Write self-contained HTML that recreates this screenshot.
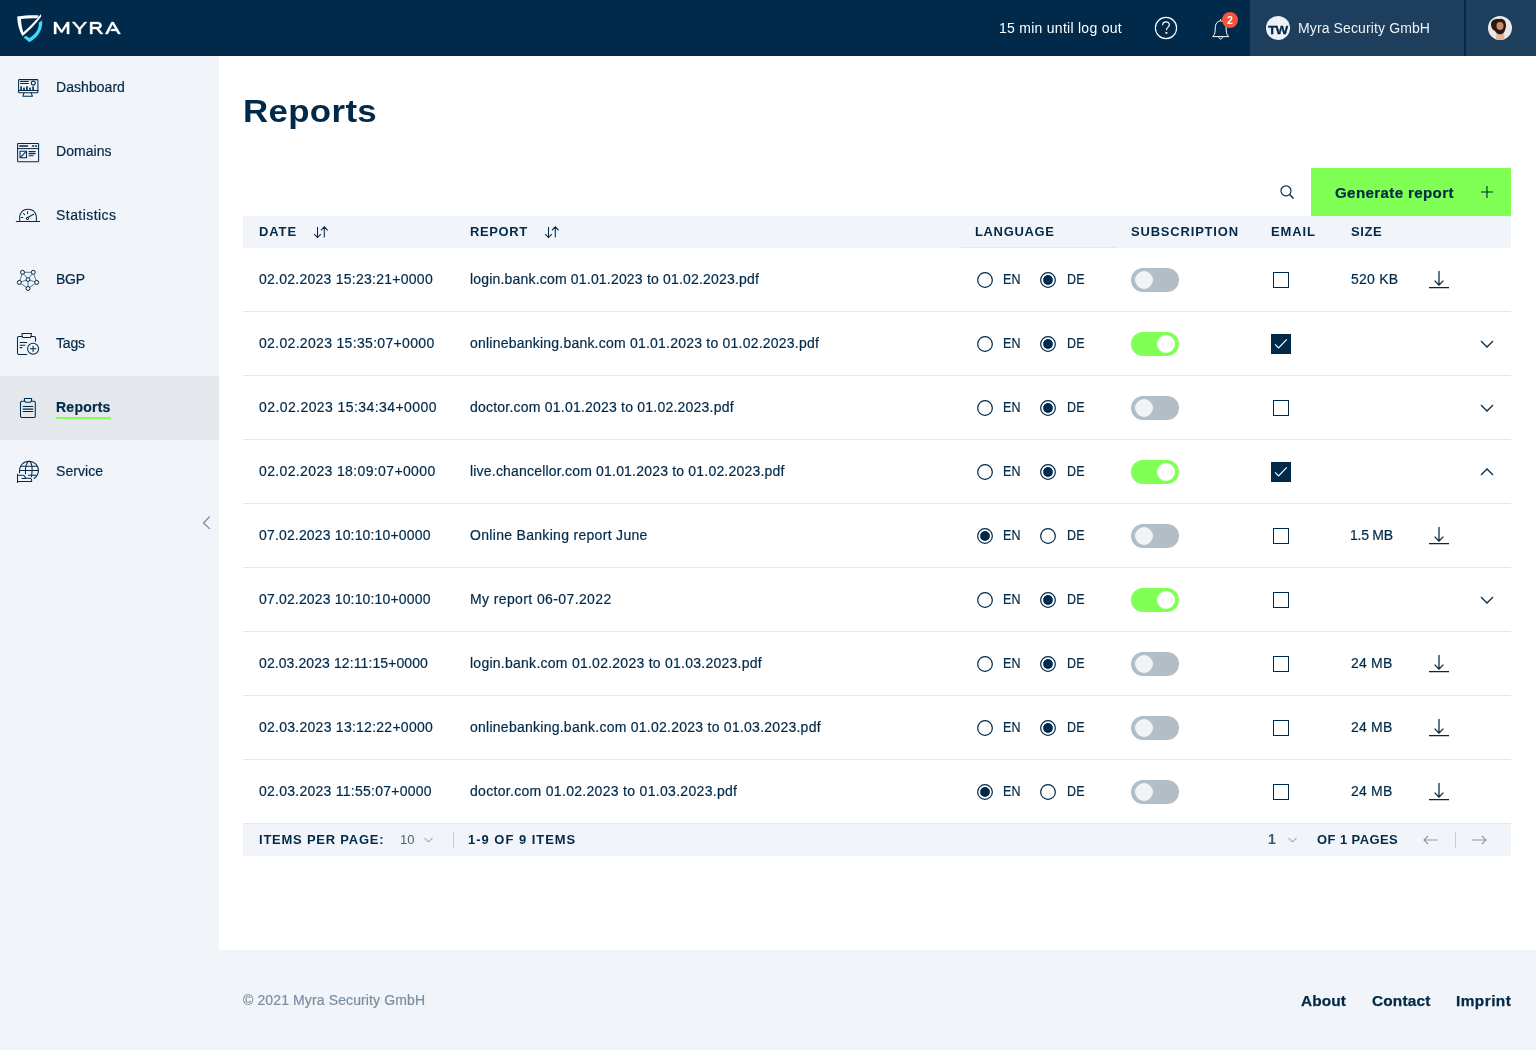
<!DOCTYPE html>
<html><head><meta charset="utf-8"><style>
*{box-sizing:border-box;margin:0;padding:0}
html,body{width:1536px;height:1050px;overflow:hidden;background:#fff;font-family:"Liberation Sans",sans-serif;color:#012a4a}
div,span,svg{position:absolute}
#hdr{left:0;top:0;width:1536px;height:56px;background:#012a4a}
.hright{left:1250px;top:0;width:286px;height:56px;background:#1d3e5c}
.hsep{left:1464px;top:0;width:2px;height:56px;background:#012a4a}
.ht{font-size:14px;line-height:16px;color:#fff;white-space:nowrap}
#side{left:0;top:56px;width:219px;height:894px;background:#f1f4f9}
.nav{left:0;width:219px;height:64px}
.nav.act{background:#e4e8ed}
.lbl{left:56px;top:23px;font-size:14px;line-height:16px;color:#012a4a;letter-spacing:0.05px;white-space:nowrap;-webkit-text-stroke:0.2px currentColor}
#foot{left:0;top:950px;width:1536px;height:100px;background:#f1f4f9}
.h1{left:243px;top:93px;font-size:32px;line-height:36px;font-weight:bold;color:#012a4a;letter-spacing:0.3px;white-space:nowrap;transform:scaleX(1.09);transform-origin:0 0}
.th{top:216px;left:243px;width:1268px;height:32px;background:#f1f4f9}
.thl{top:225px;font-size:12px;line-height:14px;font-weight:bold;letter-spacing:0.85px;transform:scaleX(1.08);transform-origin:0 0;color:#012a4a;white-space:nowrap}
.row{left:243px;width:1268px;height:64px;border-bottom:1px solid #e3e8ee}
.c{font-size:14px;line-height:16px;letter-spacing:0.22px;color:#012a4a;white-space:nowrap;-webkit-text-stroke:0.2px currentColor}
.radio{width:16px;height:16px;border:1.5px solid #012a4a;border-radius:50%}
.radio.on::after{content:"";position:absolute;left:2.5px;top:2.5px;width:8px;height:8px;border-radius:50%;background:#012a4a}
.tog{width:48px;height:24px;border-radius:12px;background:#b1bdc7}
.tog .k{left:4px;top:3px;width:18px;height:18px;border-radius:50%;background:#f1f4f7}
.tog.on{background:#80ff55}
.tog.on .k{left:26px;background:#fff}
.cb{width:16px;height:16px;border:1.5px solid #012a4a}
.cb.on{width:20px;height:20px;background:#012a4a;border:none}
.pager{left:243px;top:824px;width:1268px;height:32px;background:#f1f4f9}
.pt{font-size:12px;line-height:14px;font-weight:bold;letter-spacing:1.5px;color:#012a4a;white-space:nowrap}
.btn{left:1311px;top:168px;width:200px;height:48px;background:#80ff55}
</style></head><body>
<div id="root" style="left:0;top:0;width:1536px;height:1050px;background:#fff;will-change:transform">
<div id="hdr">
<svg style="left:0;top:0" width="130" height="56" viewBox="0 0 130 56"><path d="M17.2 16.6 C24 15.3 31 15 37.6 15.2 C38.6 15.3 38.8 16.2 38.2 17.1 C37.8 17.8 37.3 18.2 36.5 18.3 C31 18.1 26 18.3 21 19 C21.2 24 22 28.4 23.4 32.5 L22.4 36.3 C19.2 30.5 17.3 24 17.2 16.6 Z" fill="#fff"/><path d="M22.3 36.3 L23.2 32.5 C29.5 27 35.5 21 40.7 14.3 C41.3 15.3 41.3 16.3 40.9 17.1 C35 25 29 31 22.3 36.3 Z" fill="#fff"/><path d="M42.2 20.3 C43 29.5 38.2 37.6 29.4 42.2 L23.6 37.5 L25.8 35.8 L29.4 38 C35.8 34.4 39.2 28.5 38.8 22.8 Z" fill="#40d8fb"/><path d="M54 34 V22 H56.3 L61.6 30.3 L66.9 22 H69.2 V34 H66.9 V25.8 L62.4 32.6 H60.8 L56.3 25.8 V34 Z" fill="#fff" stroke="#fff" stroke-width="0.35"/><path d="M72 22 H74.8 L79.6 27.8 L84.4 22 H87.1 L80.8 29.3 V34 H78.4 V29.3 Z" fill="#fff" stroke="#fff" stroke-width="0.35"/><path d="M90.1 34 V22 H97.5 C100.3 22 101.7 23.5 101.7 25.4 C101.7 27.1 100.6 28.3 98.8 28.7 L103.2 34 H100.4 L96.3 28.9 H92.4 V34 Z M92.4 24 V27 H97.3 C98.7 27 99.4 26.4 99.4 25.5 C99.4 24.6 98.7 24 97.3 24 Z" fill="#fff" stroke="#fff" stroke-width="0.35"/><path d="M105.2 34 L111.5 22 H113.6 L120.6 34 H118 L116.3 30.9 H110.6 L111.6 29 H115.2 L112.5 24.2 L107.9 34 Z" fill="#fff" stroke="#fff" stroke-width="0.35"/></svg>
<span class="ht" style="left:999px;top:20px;letter-spacing:0.27px">15 min until log out</span>
<svg style="left:1154px;top:16px" width="24" height="24" viewBox="0 0 24 24"><circle cx="12" cy="12" r="10.6" fill="none" stroke="#fff" stroke-width="1.15"/><path d="M8.6 9.2 C8.6 7.2 10.1 5.9 12 5.9 C13.9 5.9 15.3 7.1 15.3 8.9 C15.3 11 12.4 11.3 12.4 14.2" fill="none" stroke="#fff" stroke-width="1.2"/><rect x="11.5" y="16" width="1.8" height="1.8" fill="#fff"/></svg>
<svg style="left:1200px;top:0" width="40" height="56" viewBox="0 0 40 56"><g fill="none" stroke="#fff" stroke-width="1.0" stroke-linejoin="round"><path d="M20.7 19.2 V20.9"/><path d="M12.6 36.6 H28.8 C27.3 35.5 26.5 33.5 26.3 31 L26 26.5 C25.7 23 23.4 20.9 20.7 20.9 C18 20.9 15.7 23 15.4 26.5 L15.1 31 C14.9 33.5 14.1 35.5 12.6 36.6 Z"/><path d="M18.9 37 C18.9 39.6 22.5 39.6 22.5 37"/></g></svg>
<div style="left:1222px;top:12px;width:16px;height:16px;border-radius:50%;background:#f4533d"></div>
<span class="ht" style="left:1222px;top:13.5px;width:16px;text-align:center;font-size:10.5px;line-height:13px;font-weight:bold">2</span>
</div>
<div class="hright"></div><div class="hsep"></div>
<div style="left:1266px;top:16px;width:24px;height:24px;border-radius:50%;background:#eef1f6"></div>
<span style="left:1267.5px;top:23.5px;font-size:11px;line-height:13px;font-weight:bold;color:#012a4a;letter-spacing:-0.6px;-webkit-text-stroke:0.3px #012a4a;transform:scaleX(1.22);transform-origin:0 0">TW</span>
<span class="ht" style="left:1298px;top:20px;color:#eef1f6;letter-spacing:0.12px">Myra Security GmbH</span>
<svg style="left:1488px;top:16px" width="24" height="24" viewBox="0 0 24 24"><defs><clipPath id="avc"><circle cx="12" cy="12" r="12"/></clipPath></defs><g clip-path="url(#avc)"><rect width="24" height="24" fill="#ebe8e5"/><path d="M8 24 L8.5 17 H16 L16.5 24 Z" fill="#e2b79b"/><path d="M3 8.5 C3 4 7 2.5 10.5 3 C14 2 17.5 3.5 17.8 7.5 C18.5 10 17.5 13 16.5 15.5 C15.5 17.5 13.5 18.5 11.5 18.3 C9.5 18.2 8 17 7 15 C4.5 14 3 11.5 3 8.5 Z" fill="#2b1a12"/><path d="M8.5 9.5 C8.5 7 10 6 12 6 C14.2 6 15.7 7.2 15.5 10 C15.4 12.5 14.5 14.8 12 15 C9.8 15 8.6 12.5 8.5 9.5 Z" fill="#c98f6c"/><path d="M9.5 12.5 C10.5 14.5 13.5 14.5 14.8 12.2 L14.8 15 C13.5 16.5 10.5 16.5 9.3 15 Z" fill="#2b1a12"/></g></svg>
<div id="side"></div>
<div class="nav" style="top:56px">
<svg style="left:0;top:0" width="56" height="64" viewBox="0 0 56 64"><g fill="none" stroke="#012a4a" stroke-width="1.05" stroke-linecap="round" stroke-linejoin="round"><rect x="18.6" y="23.6" width="19.3" height="13.2" rx="0.8"/><path d="M18.6 34.4 H37.9 M24 36.9 L22.9 40.3 H32.4 L31.3 36.9"/><path d="M20.5 25.5 H28.3 M20.5 27.4 H28.3"/><circle cx="33.3" cy="27.1" r="2"/></g><g fill="#012a4a"><rect x="20.3" y="30.3" width="1.6" height="4.1" rx="0.5"/><rect x="23.2" y="31.4" width="1.6" height="3" rx="0.5"/><rect x="26.1" y="30.3" width="1.7" height="4.1" rx="0.5"/><rect x="29.2" y="31.4" width="1.6" height="3" rx="0.5"/><rect x="32.3" y="30.3" width="1.6" height="4.1" rx="0.5"/></g></svg>
<span class="lbl" style="letter-spacing:0.05px">Dashboard</span>
</div>
<div class="nav" style="top:120px">
<svg style="left:0;top:0" width="56" height="64" viewBox="0 0 56 64"><g fill="none" stroke="#012a4a" stroke-width="1.05" stroke-linejoin="round"><rect x="17.6" y="23.5" width="21" height="18.2" rx="0.6"/><path d="M17.6 28.6 H38.6"/><rect x="20" y="31.2" width="6.5" height="6.6"/><path d="M20.5 37.3 L26 31.7 M28.6 31.6 H35.6 M28.6 33.6 H35.6 M28.6 35.7 H33.5"/></g><path d="M19.8 26 H27.5 M32.5 26 H33.5 M35.5 26 H36.5" stroke="#012a4a" stroke-width="1.6" stroke-linecap="round"/></svg>
<span class="lbl" style="letter-spacing:0.05px">Domains</span>
</div>
<div class="nav" style="top:184px">
<svg style="left:0;top:0" width="56" height="64" viewBox="0 0 56 64"><g fill="none" stroke="#012a4a" stroke-width="1.05" stroke-linecap="round"><path d="M16.3 37.5 H39.6"/><path d="M19.8 37 C18.6 29.5 22.5 25.2 28 25.2 C33.5 25.2 37.4 29.5 36.3 37"/><path d="M27.6 27.6 V29.5 M23.5 29.5 L24.7 30.7 M21.3 33.5 H22.9 M28.3 33.2 L33.6 30.3"/><circle cx="27.5" cy="34.3" r="1.1"/></g></svg>
<span class="lbl" style="letter-spacing:0.45px">Statistics</span>
</div>
<div class="nav" style="top:248px">
<svg style="left:0;top:0" width="56" height="64" viewBox="0 0 56 64"><g fill="none" stroke="#012a4a" stroke-width="1.0"><circle cx="22.5" cy="24.3" r="2"/><circle cx="33.3" cy="24.3" r="2"/><circle cx="28" cy="31.6" r="1.9"/><circle cx="19.3" cy="34.4" r="2"/><circle cx="36.7" cy="34.4" r="2"/><circle cx="28" cy="40.5" r="2"/></g><path d="M24.5 24.3 H31.3 M23.7 25.9 L26.8 29.9 M32.1 25.9 L29.2 29.9 M22 26.3 L19.9 32.4 M33.8 26.3 L36.1 32.4 M21.2 33.8 L26.1 32.2 M34.8 33.8 L29.9 32.2 M20.9 35.6 L26.4 39.3 M35.1 35.6 L29.6 39.3 M28 33.5 V38.5" stroke="#012a4a" stroke-width="0.8" opacity="0.8"/></svg>
<span class="lbl" style="letter-spacing:-0.3px">BGP</span>
</div>
<div class="nav" style="top:312px">
<svg style="left:0;top:0" width="56" height="64" viewBox="0 0 56 64"><g fill="none" stroke="#012a4a" stroke-width="1.05" stroke-linecap="round" stroke-linejoin="round"><path d="M22 24.5 H18.8 C18 24.5 17.5 25 17.5 25.8 V41.1 C17.5 41.9 18 42.4 18.8 42.4 H26.7"/><path d="M31 24.5 H34.2 C35 24.5 35.5 25 35.5 25.8 V29.2"/><path d="M21.9 21.5 H31.5 L30.8 25.1 C30.6 25.4 30.3 25.5 29.9 25.5 H23.2 C22.8 25.5 22.5 25.4 22.4 25.1 Z"/><path d="M20.1 30.4 H26.7 M20.1 33.2 H24.8 M20.1 35.6 H21.9"/><circle cx="33.1" cy="36.8" r="5.5"/><path d="M33.1 34 V39.6 M30.3 36.8 H35.9"/></g></svg>
<span class="lbl" style="letter-spacing:-0.2px">Tags</span>
</div>
<div class="nav act" style="top:376px">
<svg style="left:0;top:0" width="56" height="64" viewBox="0 0 56 64"><g fill="none" stroke="#012a4a" stroke-width="1.05" stroke-linecap="round" stroke-linejoin="round"><path d="M24.4 25.2 H21.7 C21 25.2 20.5 25.7 20.5 26.4 V40.3 C20.5 41 21 41.5 21.7 41.5 H34.1 C34.8 41.5 35.3 41 35.3 40.3 V26.4 C35.3 25.7 34.8 25.2 34.1 25.2 H31.6"/><path d="M24.4 22.4 H31.6 V24.6 L30.3 26.3 H25.7 L24.4 24.6 Z"/><path d="M23.2 30.4 H32.8 M23.2 33.1 H32.8 M23.2 35.5 H32.8"/></g></svg>
<span class="lbl" style="font-weight:bold;letter-spacing:0.25px;top:22.5px">Reports</span>
<div style="left:56px;top:41px;width:55px;height:2px;background:#80ff55"></div>
</div>
<div class="nav" style="top:440px">
<svg style="left:0;top:0" width="56" height="64" viewBox="0 0 56 64"><g fill="none" stroke="#012a4a" stroke-width="1.05" stroke-linecap="round" stroke-linejoin="round"><path d="M19.5 32.7 C19 25.5 23.5 21.2 29.1 21.2 C34.2 21.2 38.4 25.3 38.4 30.5 C38.4 33.8 36.8 36.6 34.1 38.5"/><path d="M25.5 33.7 C25 26.5 26.8 21.5 29.1 21.2 C31.4 21.5 33 26.5 31.5 36.7 M21.3 26.3 H36.8 M19.7 30.4 H38.3 M28.5 35.3 H36.5"/><path d="M17.5 34.3 V42.5 M17.5 35.3 H23.2 C24.3 35.3 25 36.8 25.6 38.3 H30.4 C31.2 38.5 31.7 39.6 31.7 40.7 V41.5 H17.5 M22.1 38.5 H25.6"/></g></svg>
<span class="lbl" style="letter-spacing:0.05px">Service</span>
</div>
<svg style="left:196px;top:510px" width="20" height="24" viewBox="0 0 20 24"><path d="M13.8 6.3 L7.5 13 L13.8 18.8" fill="none" stroke="#6e8296" stroke-width="1.1"/></svg>
<div id="foot"></div>
<span class="c" style="left:243px;top:992px;color:#7b8ea1;letter-spacing:0.12px">© 2021 Myra Security GmbH</span>
<span class="c" style="left:1301px;top:992.5px;font-weight:bold;letter-spacing:0.12px;-webkit-text-stroke:0.25px #012a4a;transform:scaleX(1.1);transform-origin:0 0">About</span>
<span class="c" style="left:1372px;top:992.5px;font-weight:bold;letter-spacing:0.15px;-webkit-text-stroke:0.25px #012a4a;transform:scaleX(1.1);transform-origin:0 0">Contact</span>
<span class="c" style="left:1456px;top:992.5px;font-weight:bold;letter-spacing:0.4px;-webkit-text-stroke:0.25px #012a4a;transform:scaleX(1.1);transform-origin:0 0">Imprint</span>
<span class="h1">Reports</span>
<svg style="left:1279px;top:184px" width="16" height="16" viewBox="0 0 16 16"><circle cx="7" cy="6.8" r="5" fill="none" stroke="#012a4a" stroke-width="1.15"/><path d="M10.6 10.6 L14.5 14.5" stroke="#012a4a" stroke-width="1.4"/></svg>
<div class="btn"></div>
<span class="c" style="left:1335px;top:185px;font-weight:bold;letter-spacing:0.33px;transform:scaleX(1.08);transform-origin:0 0">Generate report</span>
<svg style="left:1480px;top:185px" width="14" height="14" viewBox="0 0 14 14"><path d="M7 1 V13 M1 7 H13" stroke="#012a4a" stroke-width="1.1"/></svg>
<div class="th"></div>
<div style="left:960px;top:247px;width:156px;height:1px;background:#e6eaf0"></div>
<span class="thl" style="left:259px;letter-spacing:0.85px">DATE</span>
<span class="thl" style="left:470px;letter-spacing:0.6px">REPORT</span>
<span class="thl" style="left:975px;letter-spacing:0.62px">LANGUAGE</span>
<span class="thl" style="left:1131px;letter-spacing:0.77px">SUBSCRIPTION</span>
<span class="thl" style="left:1271px;letter-spacing:0.85px">EMAIL</span>
<span class="thl" style="left:1351px;letter-spacing:0.55px">SIZE</span>
<svg style="left:313px;top:225px" width="16" height="15" viewBox="0 0 16 15"><path d="M4.5 2 V12.6 M1.2 9.2 L4.5 12.6 L7.8 9.2 M11.3 12.6 V1.8 M7.9 5.3 L11.3 1.8 L14.7 5.3" fill="none" stroke="#012a4a" stroke-width="1.05"/></svg>
<svg style="left:544px;top:225px" width="16" height="15" viewBox="0 0 16 15"><path d="M4.5 2 V12.6 M1.2 9.2 L4.5 12.6 L7.8 9.2 M11.3 12.6 V1.8 M7.9 5.3 L11.3 1.8 L14.7 5.3" fill="none" stroke="#012a4a" stroke-width="1.05"/></svg>
<div class="row" style="top:248px"></div>
<span class="c" style="left:259px;top:271px;letter-spacing:0.257px">02.02.2023 15:23:21+0000</span>
<span class="c" style="left:470px;top:271px;letter-spacing:0.188px">login.bank.com 01.01.2023 to 01.02.2023.pdf</span>
<svg style="left:977px;top:272px" width="16" height="16" viewBox="0 0 16 16"><circle cx="8" cy="8" r="7.35" fill="none" stroke="#012a4a" stroke-width="1.2"/></svg>
<span class="c" style="left:1003px;top:271px;transform:scaleX(0.89);transform-origin:0 0">EN</span>
<svg style="left:1040px;top:272px" width="16" height="16" viewBox="0 0 16 16"><circle cx="8" cy="8" r="7.35" fill="none" stroke="#012a4a" stroke-width="1.2"/><circle cx="8" cy="8" r="4.9" fill="#012a4a"/></svg>
<span class="c" style="left:1066.5px;top:271px;transform:scaleX(0.89);transform-origin:0 0">DE</span>
<div class="tog" style="left:1131px;top:268px"><div class="k"></div></div>
<div class="cb" style="left:1273px;top:272px"></div>
<span class="c" style="left:1351px;top:271px">520 KB</span>
<svg style="left:1429px;top:270px" width="20" height="20" viewBox="0 0 20 20"><path d="M10 1 V15 M5.6 10.6 L10 15 L14.4 10.6 M0 17.6 H20" fill="none" stroke="#012a4a" stroke-width="1.25"/></svg>
<div class="row" style="top:312px"></div>
<span class="c" style="left:259px;top:335px;letter-spacing:0.322px">02.02.2023 15:35:07+0000</span>
<span class="c" style="left:470px;top:335px;letter-spacing:0.220px">onlinebanking.bank.com 01.01.2023 to 01.02.2023.pdf</span>
<svg style="left:977px;top:336px" width="16" height="16" viewBox="0 0 16 16"><circle cx="8" cy="8" r="7.35" fill="none" stroke="#012a4a" stroke-width="1.2"/></svg>
<span class="c" style="left:1003px;top:335px;transform:scaleX(0.89);transform-origin:0 0">EN</span>
<svg style="left:1040px;top:336px" width="16" height="16" viewBox="0 0 16 16"><circle cx="8" cy="8" r="7.35" fill="none" stroke="#012a4a" stroke-width="1.2"/><circle cx="8" cy="8" r="4.9" fill="#012a4a"/></svg>
<span class="c" style="left:1066.5px;top:335px;transform:scaleX(0.89);transform-origin:0 0">DE</span>
<div class="tog on" style="left:1131px;top:332px"><div class="k"></div></div>
<div class="cb on" style="left:1271px;top:334px"><svg style="left:0;top:0" width="20" height="20" viewBox="0 0 20 20"><path d="M4.1 10.3 L7.6 13.9 L15.8 5.3" fill="none" stroke="#fff" stroke-width="1.1"/></svg></div>
<svg style="left:1480px;top:340px" width="14" height="9" viewBox="0 0 14 9"><path d="M1 1 L7 7 L13 1" fill="none" stroke="#012a4a" stroke-width="1.3"/></svg>
<div class="row" style="top:376px"></div>
<span class="c" style="left:259px;top:399px;letter-spacing:0.422px">02.02.2023 15:34:34+0000</span>
<span class="c" style="left:470px;top:399px;letter-spacing:0.218px">doctor.com 01.01.2023 to 01.02.2023.pdf</span>
<svg style="left:977px;top:400px" width="16" height="16" viewBox="0 0 16 16"><circle cx="8" cy="8" r="7.35" fill="none" stroke="#012a4a" stroke-width="1.2"/></svg>
<span class="c" style="left:1003px;top:399px;transform:scaleX(0.89);transform-origin:0 0">EN</span>
<svg style="left:1040px;top:400px" width="16" height="16" viewBox="0 0 16 16"><circle cx="8" cy="8" r="7.35" fill="none" stroke="#012a4a" stroke-width="1.2"/><circle cx="8" cy="8" r="4.9" fill="#012a4a"/></svg>
<span class="c" style="left:1066.5px;top:399px;transform:scaleX(0.89);transform-origin:0 0">DE</span>
<div class="tog" style="left:1131px;top:396px"><div class="k"></div></div>
<div class="cb" style="left:1273px;top:400px"></div>
<svg style="left:1480px;top:404px" width="14" height="9" viewBox="0 0 14 9"><path d="M1 1 L7 7 L13 1" fill="none" stroke="#012a4a" stroke-width="1.3"/></svg>
<div class="row" style="top:440px"></div>
<span class="c" style="left:259px;top:463px;letter-spacing:0.365px">02.02.2023 18:09:07+0000</span>
<span class="c" style="left:470px;top:463px;letter-spacing:0.196px">live.chancellor.com 01.01.2023 to 01.02.2023.pdf</span>
<svg style="left:977px;top:464px" width="16" height="16" viewBox="0 0 16 16"><circle cx="8" cy="8" r="7.35" fill="none" stroke="#012a4a" stroke-width="1.2"/></svg>
<span class="c" style="left:1003px;top:463px;transform:scaleX(0.89);transform-origin:0 0">EN</span>
<svg style="left:1040px;top:464px" width="16" height="16" viewBox="0 0 16 16"><circle cx="8" cy="8" r="7.35" fill="none" stroke="#012a4a" stroke-width="1.2"/><circle cx="8" cy="8" r="4.9" fill="#012a4a"/></svg>
<span class="c" style="left:1066.5px;top:463px;transform:scaleX(0.89);transform-origin:0 0">DE</span>
<div class="tog on" style="left:1131px;top:460px"><div class="k"></div></div>
<div class="cb on" style="left:1271px;top:462px"><svg style="left:0;top:0" width="20" height="20" viewBox="0 0 20 20"><path d="M4.1 10.3 L7.6 13.9 L15.8 5.3" fill="none" stroke="#fff" stroke-width="1.1"/></svg></div>
<svg style="left:1480px;top:468px" width="14" height="9" viewBox="0 0 14 9"><path d="M1 7 L7 1 L13 7" fill="none" stroke="#012a4a" stroke-width="1.3"/></svg>
<div class="row" style="top:504px"></div>
<span class="c" style="left:259px;top:527px;letter-spacing:0.161px">07.02.2023 10:10:10+0000</span>
<span class="c" style="left:470px;top:527px;letter-spacing:0.308px">Online Banking report June</span>
<svg style="left:977px;top:528px" width="16" height="16" viewBox="0 0 16 16"><circle cx="8" cy="8" r="7.35" fill="none" stroke="#012a4a" stroke-width="1.2"/><circle cx="8" cy="8" r="4.9" fill="#012a4a"/></svg>
<span class="c" style="left:1003px;top:527px;transform:scaleX(0.89);transform-origin:0 0">EN</span>
<svg style="left:1040px;top:528px" width="16" height="16" viewBox="0 0 16 16"><circle cx="8" cy="8" r="7.35" fill="none" stroke="#012a4a" stroke-width="1.2"/></svg>
<span class="c" style="left:1066.5px;top:527px;transform:scaleX(0.89);transform-origin:0 0">DE</span>
<div class="tog" style="left:1131px;top:524px"><div class="k"></div></div>
<div class="cb" style="left:1273px;top:528px"></div>
<span class="c" style="left:1350px;top:527px;letter-spacing:-0.26px">1.5 MB</span>
<svg style="left:1429px;top:526px" width="20" height="20" viewBox="0 0 20 20"><path d="M10 1 V15 M5.6 10.6 L10 15 L14.4 10.6 M0 17.6 H20" fill="none" stroke="#012a4a" stroke-width="1.25"/></svg>
<div class="row" style="top:568px"></div>
<span class="c" style="left:259px;top:591px;letter-spacing:0.161px">07.02.2023 10:10:10+0000</span>
<span class="c" style="left:470px;top:591px;letter-spacing:0.389px">My report 06-07.2022</span>
<svg style="left:977px;top:592px" width="16" height="16" viewBox="0 0 16 16"><circle cx="8" cy="8" r="7.35" fill="none" stroke="#012a4a" stroke-width="1.2"/></svg>
<span class="c" style="left:1003px;top:591px;transform:scaleX(0.89);transform-origin:0 0">EN</span>
<svg style="left:1040px;top:592px" width="16" height="16" viewBox="0 0 16 16"><circle cx="8" cy="8" r="7.35" fill="none" stroke="#012a4a" stroke-width="1.2"/><circle cx="8" cy="8" r="4.9" fill="#012a4a"/></svg>
<span class="c" style="left:1066.5px;top:591px;transform:scaleX(0.89);transform-origin:0 0">DE</span>
<div class="tog on" style="left:1131px;top:588px"><div class="k"></div></div>
<div class="cb" style="left:1273px;top:592px"></div>
<svg style="left:1480px;top:596px" width="14" height="9" viewBox="0 0 14 9"><path d="M1 1 L7 7 L13 1" fill="none" stroke="#012a4a" stroke-width="1.3"/></svg>
<div class="row" style="top:632px"></div>
<span class="c" style="left:259px;top:655px;letter-spacing:0.091px">02.03.2023 12:11:15+0000</span>
<span class="c" style="left:470px;top:655px;letter-spacing:0.255px">login.bank.com 01.02.2023 to 01.03.2023.pdf</span>
<svg style="left:977px;top:656px" width="16" height="16" viewBox="0 0 16 16"><circle cx="8" cy="8" r="7.35" fill="none" stroke="#012a4a" stroke-width="1.2"/></svg>
<span class="c" style="left:1003px;top:655px;transform:scaleX(0.89);transform-origin:0 0">EN</span>
<svg style="left:1040px;top:656px" width="16" height="16" viewBox="0 0 16 16"><circle cx="8" cy="8" r="7.35" fill="none" stroke="#012a4a" stroke-width="1.2"/><circle cx="8" cy="8" r="4.9" fill="#012a4a"/></svg>
<span class="c" style="left:1066.5px;top:655px;transform:scaleX(0.89);transform-origin:0 0">DE</span>
<div class="tog" style="left:1131px;top:652px"><div class="k"></div></div>
<div class="cb" style="left:1273px;top:656px"></div>
<span class="c" style="left:1351px;top:655px">24 MB</span>
<svg style="left:1429px;top:654px" width="20" height="20" viewBox="0 0 20 20"><path d="M10 1 V15 M5.6 10.6 L10 15 L14.4 10.6 M0 17.6 H20" fill="none" stroke="#012a4a" stroke-width="1.25"/></svg>
<div class="row" style="top:696px"></div>
<span class="c" style="left:259px;top:719px;letter-spacing:0.261px">02.03.2023 13:12:22+0000</span>
<span class="c" style="left:470px;top:719px;letter-spacing:0.255px">onlinebanking.bank.com 01.02.2023 to 01.03.2023.pdf</span>
<svg style="left:977px;top:720px" width="16" height="16" viewBox="0 0 16 16"><circle cx="8" cy="8" r="7.35" fill="none" stroke="#012a4a" stroke-width="1.2"/></svg>
<span class="c" style="left:1003px;top:719px;transform:scaleX(0.89);transform-origin:0 0">EN</span>
<svg style="left:1040px;top:720px" width="16" height="16" viewBox="0 0 16 16"><circle cx="8" cy="8" r="7.35" fill="none" stroke="#012a4a" stroke-width="1.2"/><circle cx="8" cy="8" r="4.9" fill="#012a4a"/></svg>
<span class="c" style="left:1066.5px;top:719px;transform:scaleX(0.89);transform-origin:0 0">DE</span>
<div class="tog" style="left:1131px;top:716px"><div class="k"></div></div>
<div class="cb" style="left:1273px;top:720px"></div>
<span class="c" style="left:1351px;top:719px">24 MB</span>
<svg style="left:1429px;top:718px" width="20" height="20" viewBox="0 0 20 20"><path d="M10 1 V15 M5.6 10.6 L10 15 L14.4 10.6 M0 17.6 H20" fill="none" stroke="#012a4a" stroke-width="1.25"/></svg>
<div class="row" style="top:760px"></div>
<span class="c" style="left:259px;top:783px;letter-spacing:0.252px">02.03.2023 11:55:07+0000</span>
<span class="c" style="left:470px;top:783px;letter-spacing:0.308px">doctor.com 01.02.2023 to 01.03.2023.pdf</span>
<svg style="left:977px;top:784px" width="16" height="16" viewBox="0 0 16 16"><circle cx="8" cy="8" r="7.35" fill="none" stroke="#012a4a" stroke-width="1.2"/><circle cx="8" cy="8" r="4.9" fill="#012a4a"/></svg>
<span class="c" style="left:1003px;top:783px;transform:scaleX(0.89);transform-origin:0 0">EN</span>
<svg style="left:1040px;top:784px" width="16" height="16" viewBox="0 0 16 16"><circle cx="8" cy="8" r="7.35" fill="none" stroke="#012a4a" stroke-width="1.2"/></svg>
<span class="c" style="left:1066.5px;top:783px;transform:scaleX(0.89);transform-origin:0 0">DE</span>
<div class="tog" style="left:1131px;top:780px"><div class="k"></div></div>
<div class="cb" style="left:1273px;top:784px"></div>
<span class="c" style="left:1351px;top:783px">24 MB</span>
<svg style="left:1429px;top:782px" width="20" height="20" viewBox="0 0 20 20"><path d="M10 1 V15 M5.6 10.6 L10 15 L14.4 10.6 M0 17.6 H20" fill="none" stroke="#012a4a" stroke-width="1.25"/></svg>
<div class="pager"></div>
<span class="pt" style="left:259px;top:833px;letter-spacing:0.73px;transform:scaleX(1.08);transform-origin:0 0">ITEMS PER PAGE:</span>
<span class="pt" style="left:400px;top:833px;font-weight:normal;font-size:13px;letter-spacing:0px;color:#4a6077">10</span>
<svg style="left:423px;top:836px" width="12" height="8" viewBox="0 0 12 8"><path d="M1.5 2 L5.5 6 L9.5 2" fill="none" stroke="#6b7f93" stroke-width="0.9"/></svg>
<div style="left:453px;top:832px;width:1px;height:16px;background:#c5cfd9"></div>
<span class="pt" style="left:468px;top:833px;letter-spacing:0.92px;transform:scaleX(1.08);transform-origin:0 0">1-9 OF 9 ITEMS</span>
<span class="pt" style="left:1268px;top:832px;font-size:14px;color:#3d5570">1</span>
<svg style="left:1287px;top:836px" width="12" height="8" viewBox="0 0 12 8"><path d="M1.5 2 L5.5 6 L9.5 2" fill="none" stroke="#6b7f93" stroke-width="0.9"/></svg>
<span class="pt" style="left:1317px;top:833px;letter-spacing:0.4px;transform:scaleX(1.08);transform-origin:0 0">OF 1 PAGES</span>
<svg style="left:1422px;top:834px" width="18" height="12" viewBox="0 0 18 12"><path d="M16 6 H2 M6 2 L2 6 L6 10" fill="none" stroke="#8a9bb0" stroke-width="1.1"/></svg>
<div style="left:1455px;top:832px;width:1px;height:16px;background:#c5cfd9"></div>
<svg style="left:1470px;top:834px" width="18" height="12" viewBox="0 0 18 12"><path d="M2 6 H16 M12 2 L16 6 L12 10" fill="none" stroke="#8a9bb0" stroke-width="1.1"/></svg>
</div>
</body></html>
